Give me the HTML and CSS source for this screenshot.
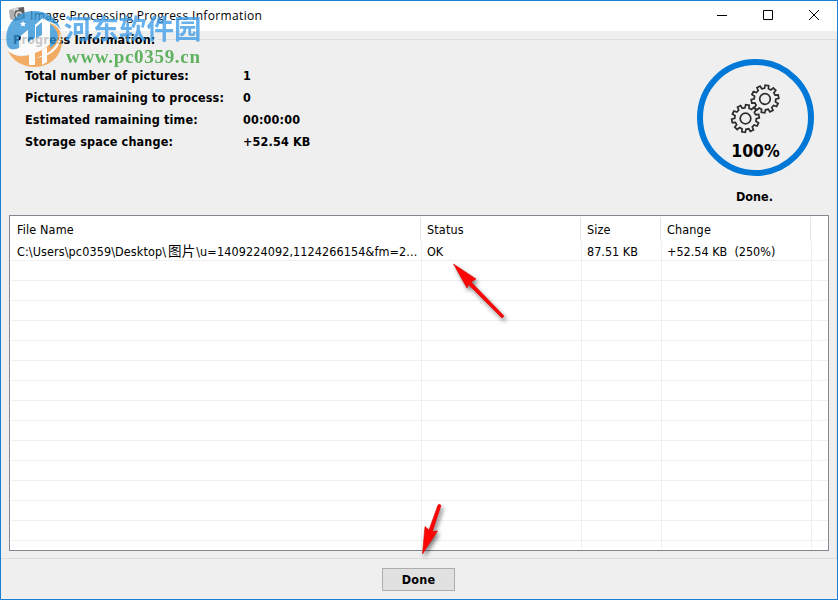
FILE: index.html
```html
<!DOCTYPE html>
<html lang="en">
<head>
  <meta charset="UTF-8" />
  <title>Image Processing Progress Information</title>
  <link rel="stylesheet" href="styles.css">
</head>
<body>
  <div class="window">
    <div class="titlebar">
      <svg class="app-icon" width="17" height="15" viewBox="0 0 17 15">
        <path d="M6 1L15 0L16 11L6 14Z" fill="#606060"/>
        <path d="M0 3L6 1V14L1 12Z" fill="#b0b0b0"/>
        <path d="M2 2L9 0L10 3L5 4Z" fill="#d5d5d5"/>
        <circle cx="10" cy="8" r="4.2" fill="#d8d8d8" stroke="#444"/>
        <circle cx="10" cy="8" r="2" fill="#777"/>
      </svg>
      <span class="title">Image Processing Progress Information</span>
      <div class="controls">
        <svg width="12" height="12" viewBox="0 0 12 12"><path d="M1 6.5H11"/></svg>
        <svg width="12" height="12" viewBox="0 0 12 12"><path d="M1.5 1.5H10.5V10.5H1.5Z"/></svg>
        <svg width="12" height="12" viewBox="0 0 12 12"><path d="M1 1L11 11M11 1L1 11"/></svg>
      </div>
    </div>

    <div class="group">
      <div class="legend"><span>Progress Information:</span></div>
      <div class="summary">
        <div class="stats">
          <span>Total number of pictures:</span><span>1</span>
          <span>Pictures ramaining to process:</span><span>0</span>
          <span>Estimated ramaining time:</span><span>00:00:00</span>
          <span>Storage space change:</span><span>+52.54 KB</span>
        </div>
        <div class="progress">
          <div class="ring">
            <svg class="gears" width="55" height="54" viewBox="0 0 55 54">
              <defs>
                <path id="gear" d="M10.6-2L13.7-1.7V1.7L10.6 2L9.8 4.6L12.1 6.7L10.1 9.4L7.4 7.9L5.2 9.5L5.9 12.5L2.6 13.6L1.4 10.7H-1.4L-2.6 13.6L-5.9 12.5L-5.2 9.5L-7.4 7.9L-10.1 9.4L-12.1 6.7L-9.8 4.6L-10.6 2L-13.7 1.7V-1.7L-10.6-2L-9.8-4.6L-12.1-6.7L-10.1-9.4L-7.4-7.9L-5.2-9.5L-5.9-12.5L-2.6-13.6L-1.4-10.7H1.4L2.6-13.6L5.9-12.5L5.2-9.5L7.4-7.9L10.1-9.4L12.1-6.7L9.8-4.6Z"/>
              </defs>
              <use href="#gear" transform="translate(37 17) rotate(-10)"/>
              <circle cx="37" cy="17" r="5.3"/>
              <use href="#gear" transform="translate(17.5 36.5) rotate(-10)"/>
              <circle cx="17.5" cy="36.5" r="5.3"/>
            </svg>
            <span class="percent">100%</span>
          </div>
          <span class="state">Done.</span>
        </div>
      </div>

      <div class="list">
        <div class="list-head">
          <span>File Name</span><span>Status</span><span>Size</span><span>Change</span>
        </div>
        <div class="list-body">
          <div class="row">
            <span class="path">C:\Users\pc0359\Desktop\<b>图片</b>\u=1409224092,1124266154&amp;fm=2...</span>
            <span>OK</span><span>87.51 KB</span><span>+52.54 KB&nbsp; (250%)</span>
          </div>
          <div class="empty"><i></i><i></i><i></i><i></i></div>
        </div>
      </div>
    </div>

    <div class="footer"><button class="done">Done</button></div>

    <div class="watermark">
      <svg width="60" height="60" viewBox="0 0 60 60">
        <path d="M3 37C-1 17 13 3 30 3C43 3 53 10 57 22C53 17 50 15 46 14L38 11L31 17V30L24 35V22L15 29V40C11 43 5 42 3 37Z" fill="#2f94d8"/>
        <path d="M31 17L39 10L46 15V35C42 40 37 43 31 45V58L25 57V46C17 48 9 47 3 41C6 42 12 42 17 39V28L24 22V34L31 30Z" fill="#fff"/>
        <path d="M32 19L38 14V27L32 30Z" fill="#2f94d8"/>
        <path d="M56 23C63 43 49 59 31 59C18 59 8 52 4 43C11 49 19 49 25 47V57H31V45C37 43 42 40 46 36V15C51 17 54 19 56 23Z" fill="#f3993c"/>
        <path d="M38 42L43 39V54L38 57Z" fill="#fff"/>
        <path d="M46 16C51 19 54 24 54 30C52 35 49 38 46 40Z" fill="#2f94d8"/>
        <path d="M56 25C55 38 45 47 31 50C45 49 55 42 57 30Z" fill="#fff"/>
        <path d="M19 13l1 2 2 0-1.5 1.5 .5 2-2-1-2 1 .5-2-1.5-1.5 2 0Z" fill="#fff"/>
      </svg>
      <div class="mark-text">
        <span class="mark-name">河东软件园</span>
        <span class="mark-url">www.pc0359.cn</span>
      </div>
    </div>

    <svg class="arrow arrow-status" width="64" height="66" viewBox="0 0 64 66">
      <path d="M3.5 4L26 19L21 22L54 56L52 58L18.5 24.5L17 28Z"/>
    </svg>
    <svg class="arrow arrow-done" width="34" height="64" viewBox="0 0 34 64">
      <path d="M2.5 54L5 26.5L9 30L18 5Q19.5 3.5 21 5.5L12.5 31.5L17.5 31Z"/>
    </svg>
  </div>
</body>
</html>
```
FILE: styles.css
```css
body {
  margin: 0;
  font-family: "DejaVu Sans Condensed", "DejaVu Sans", "Noto Sans CJK SC", sans-serif;
  font-stretch: condensed;
  font-size: 12.5px;
  color: #000;
}
.window {
  position: relative;
  box-sizing: border-box;
  width: 838px;
  height: 600px;
  border: 1px solid #1a7fd0;
  background: #efefef;
  display: flex;
  flex-direction: column;
  overflow: hidden;
}
.titlebar {
  height: 30px;
  flex: none;
  background: #fff;
  display: flex;
  align-items: center;
  padding: 0 17px 0 8px;
}
.app-icon {
  margin-right: 4px;
  margin-top: -3px;
}
.title {
  flex: 1;
  margin-top: -2px;
  font-family: "Open Sans", "Noto Sans", sans-serif;
  font-stretch: normal;
  font-size: 12px;
  letter-spacing: 0.35px;
}
.controls {
  display: flex;
  gap: 34px;
  margin-top: -2px;
}
.controls svg {
  fill: none;
  stroke: #000;
}
.group {
  height: 518px;
  flex: none;
  margin-top: 8px;
  border: 1px solid #dcdcdc;
  border-left: none;
}
.legend {
  height: 20px;
  margin-top: -10px;
  padding-left: 11px;
  line-height: 20px;
  font-weight: bold;
  letter-spacing: 0.16px;
}
.legend span {
  background: #efefef;
  padding: 0 1px;
}
.summary {
  height: 165px;
  display: flex;
  justify-content: space-between;
  font-weight: bold;
}
.stats {
  display: grid;
  grid-template-columns: 218px auto;
  grid-auto-rows: 22px;
  padding: 15px 0 0 24px;
  line-height: 22px;
  letter-spacing: 0.15px;
  white-space: nowrap;
}
.progress {
  display: flex;
  flex-direction: column;
  align-items: center;
  padding: 9px 22px 0 0;
}
.ring {
  box-sizing: border-box;
  width: 117px;
  height: 117px;
  border: 6px solid #0078d7;
  border-radius: 50%;
  display: flex;
  flex-direction: column;
  align-items: center;
}
.gears {
  margin-top: 17px;
  fill: none;
  stroke: #2c2c2c;
  stroke-width: 1.7;
}
.percent {
  font-size: 17.5px;
  line-height: 20px;
  margin-top: 5px;
}
.state {
  line-height: 20px;
  margin: 11px 0 0 -2px;
}
.list {
  box-sizing: border-box;
  width: 820px;
  height: 336px;
  margin-left: 8px;
  border: 1px solid #828790;
  background: #fff;
}
.list-head,
.row,
.empty {
  display: grid;
  grid-template-columns: 411px 160px 80px 150px;
  white-space: nowrap;
}
.list-head {
  height: 25px;
  padding-top: 1px;
  box-sizing: border-box;
}
.list-head span {
  box-sizing: border-box;
  height: 24px;
  border-right: 1px solid #e5e5e5;
  padding-left: 6px;
  line-height: 25px;
  letter-spacing: 0.15px;
}
.list-head span:first-child {
  padding-left: 7px;
}
.list-body {
  height: 308px;
  margin: 0 1px;
}
.row {
  height: 19px;
  line-height: 21px;
}
.row span {
  box-sizing: border-box;
  border-right: 1px solid #efefef;
  padding-left: 5px;
}
.row span:first-child {
  padding-left: 6px;
}
.row .path {
  letter-spacing: 0.1px;
}
.row b {
  font-family: "Noto Sans CJK SC", sans-serif;
  font-weight: normal;
  font-size: 13.5px;
  line-height: 1;
  margin: 0 1px 0 2px;
}
.empty {
  height: 288px;
  background: repeating-linear-gradient(#efefef 0 1px, transparent 1px 20px);
}
.empty i {
  border-right: 1px solid #efefef;
}
.footer {
  flex: 1;
  display: flex;
  justify-content: center;
  align-items: flex-start;
  padding: 9px 1px 0 0;
}
.done {
  width: 73px;
  height: 23px;
  padding: 0;
  border: 1px solid #adadad;
  background: #e1e1e1;
  font: inherit;
  font-weight: bold;
  letter-spacing: 0.2px;
}
.watermark {
  position: absolute;
  left: 3px;
  top: 7px;
  display: flex;
  opacity: 0.78;
}
.mark-text {
  display: flex;
  flex-direction: column;
  padding-top: 2px;
}
.mark-name {
  font-family: "Noto Sans CJK SC", sans-serif;
  font-weight: bold;
  font-size: 27.5px;
  line-height: 34px;
  color: #3d9ce8;
}
.mark-url {
  font-family: "Liberation Serif", serif;
  font-weight: bold;
  font-size: 19px;
  line-height: 20px;
  margin: 3px 0 0 2px;
  letter-spacing: 0.7px;
  color: #38a238;
}
.arrow {
  position: absolute;
  fill: #fb0505;
  stroke: #d00;
  stroke-width: 0.6;
  filter: drop-shadow(2px 3px 2px rgba(0, 0, 0, 0.5));
}
.arrow-status {
  left: 449px;
  top: 259px;
}
.arrow-done {
  left: 419px;
  top: 499px;
}
```
